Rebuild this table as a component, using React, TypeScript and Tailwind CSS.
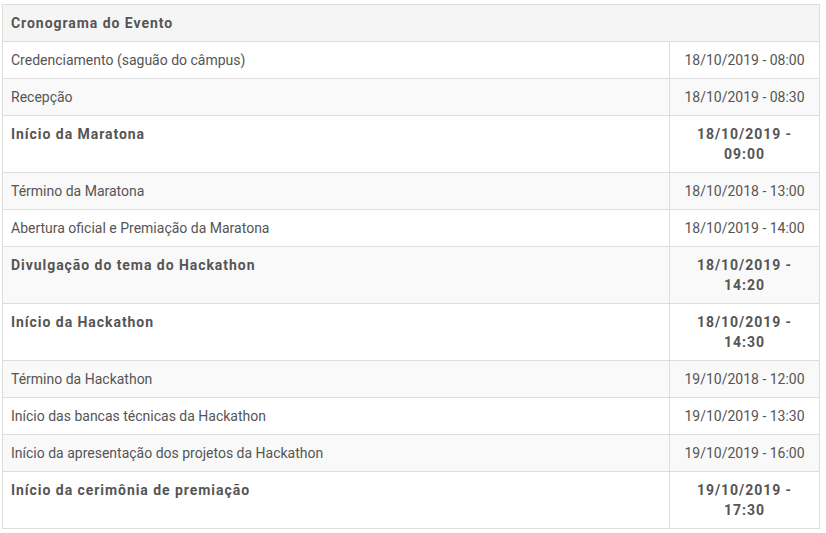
const rows: { label: string; date: string; bold?: boolean }[] = [
  { label: 'Credenciamento (saguão do câmpus)', date: '18/10/2019 - 08:00' },
  { label: 'Recepção', date: '18/10/2019 - 08:30' },
  { label: 'Início da Maratona', date: '18/10/2019 - 09:00', bold: true },
  { label: 'Término da Maratona', date: '18/10/2018 - 13:00' },
  { label: 'Abertura oficial e Premiação da Maratona', date: '18/10/2019 - 14:00' },
  { label: 'Divulgação do tema do Hackathon', date: '18/10/2019 - 14:20', bold: true },
  { label: 'Início da Hackathon', date: '18/10/2019 - 14:30', bold: true },
  { label: 'Término da Hackathon', date: '19/10/2018 - 12:00' },
  { label: 'Início das bancas técnicas da Hackathon', date: '19/10/2019 - 13:30' },
  { label: 'Início da apresentação dos projetos da Hackathon', date: '19/10/2019 - 16:00' },
  { label: 'Início da cerimônia de premiação', date: '19/10/2019 - 17:30', bold: true },
];

export default function App() {
  return (
    <div className="bg-white w-[826px] h-[533px] pl-[2px] pt-[4px] font-['Roboto',sans-serif] text-[14px] leading-[20px] text-[#555]">
      <table className="w-[818px] border-collapse border border-[#ddd]">
        <thead>
          <tr className="bg-[#f5f5f5]">
            <th colSpan={2} className="text-left font-bold tracking-[0.95px] px-[8px] py-[8px] border border-[#ddd]">
              Cronograma do Evento
            </th>
          </tr>
        </thead>
        <tbody>
          {rows.map((row, i) => (
            <tr key={i} className={i % 2 === 1 ? 'bg-[#f9f9f9]' : 'bg-white'}>
              <td
                className={`align-top px-[8px] py-[8px] border border-[#ddd] ${
                  row.bold ? 'font-bold tracking-[0.95px]' : ''
                }`}
              >
                {row.label}
              </td>
              <td
                className={`align-top w-[150px] text-center px-[8px] py-[8px] border border-[#ddd] ${
                  row.bold ? 'font-bold tracking-[0.95px]' : ''
                }`}
              >
                {row.date}
              </td>
            </tr>
          ))}
        </tbody>
      </table>
    </div>
  );
}
